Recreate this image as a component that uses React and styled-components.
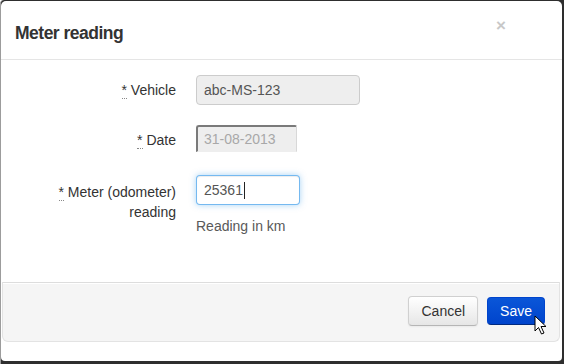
import React from "react";
import styled, { createGlobalStyle, css } from "styled-components";

const GlobalStyle = createGlobalStyle`
  html, body { margin: 0; padding: 0; background: #ffffff; }
  body { font-family: "Liberation Sans", Arial, sans-serif; color: #333; }
  * { box-sizing: border-box; }
`;

const Frame = styled.div`
  width: 564px;
  height: 364px;
  background: #2e2e2e;
  border-left: 1px solid #9c9c9c;
  border-top-left-radius: 4px;
  padding: 1px 2px 3px 0;
  display: flex;
`;

const Window = styled.div`
  flex: 1;
  background: #fff;
  border-radius: 5px 5px 4px 4px;
  display: flex;
  flex-direction: column;
  position: relative;
`;

const Header = styled.div`
  height: 59px;
  border-bottom: 1px solid #e5e5e5;
  display: flex;
  align-items: flex-start;
  padding: 0 0 0 14px;
`;

const Title = styled.h3`
  margin: 22px 0 0;
  font-size: 17.5px;
  line-height: 20px;
  font-weight: bold;
  letter-spacing: -0.5px;
  color: #333;
`;

const Close = styled.span`
  margin: 15px 56px 0 auto;
  font-size: 17px;
  line-height: 20px;
  font-weight: bold;
  color: #c8c8c8;
`;

const Body = styled.div`
  flex: 1;
  padding: 15px 0 0 15px;
  display: grid;
  grid-template-columns: 160px 1fr;
  column-gap: 20px;
  row-gap: 20px;
  align-content: start;
`;

const Label = styled.div`
  text-align: right;
  font-size: 14px;
  line-height: 20px;
  color: #333;
  padding-top: ${(p) => (p.$multi ? "7px" : "5px")};
`;

const Req = styled.abbr`
  text-decoration: none;
  border-bottom: 1px dotted #888;
  cursor: help;
`;

const Control = styled.div`
  display: flex;
  flex-direction: column;
  min-height: 30px;
`;

const Field = styled.div`
  height: 30px;
  width: ${(p) => p.$w}px;
  padding: 0 7px;
  font-size: 14px;
  line-height: 28px;
  border-radius: 4px;
  display: flex;
  align-items: center;
  ${(p) =>
    p.$variant === "readonly" &&
    css`
      background: #eeeeee;
      border: 1px solid #cccccc;
      color: #555;
    `}
  ${(p) =>
    p.$variant === "disabled" &&
    css`
      height: 27px;
      background: #eeeeee;
      border-style: solid;
      border-width: 2px 1px 1px 2px;
      border-color: #7a7a7a #d8d8d8 #eeeeee #7a7a7a;
      border-radius: 3px 2px 0 0;
      color: #a8a8a8;
      padding-left: 6px;
    `}
  ${(p) =>
    p.$variant === "focus" &&
    css`
      background: #fff;
      border: 1px solid rgba(82, 168, 236, 0.8);
      color: #555;
      box-shadow: inset 0 1px 1px rgba(0, 0, 0, 0.075),
        0 0 6px rgba(82, 168, 236, 0.5);
    `}
`;

const Caret = styled.span`
  display: inline-block;
  width: 1px;
  height: 17px;
  background: #222;
  margin-left: 1px;
`;

const Help = styled.div`
  margin-top: 11px;
  font-size: 14px;
  line-height: 20px;
  color: #595959;
`;

const Footer = styled.div`
  height: 60px;
  margin: 0 2px 19px 1px;
  background: #f5f5f5;
  border: 1px solid #e3e3e3;
  border-top-color: #dddddd;
  border-radius: 0 0 6px 6px;
  box-shadow: inset 0 1px 0 #fff;
  display: flex;
  justify-content: flex-end;
  align-items: flex-start;
  gap: 9px;
  padding: 13px 14px 0 0;
`;

const Button = styled.button`
  height: 30px;
  padding: 4px 12px;
  font-family: "Liberation Sans", Arial, sans-serif;
  font-size: 14px;
  line-height: 20px;
  border-radius: 4px;
  border: 1px solid;
  ${(p) =>
    p.$primary
      ? css`
          color: #fff;
          background: linear-gradient(#0a56d8, #0044cc);
          border-color: #0044cc #0044cc #002a80;
          margin-top: 1px;
          height: 28px;
          padding-top: 3px;
        `
      : css`
          color: #333;
          background: linear-gradient(#ffffff, #e6e6e6);
          border-color: #d0d0d0 #d0d0d0 #b5b5b5;
          box-shadow: inset 0 1px 0 rgba(255, 255, 255, 0.2),
            0 1px 2px rgba(0, 0, 0, 0.05);
        `}
`;

const Cursor = styled.svg`
  position: absolute;
  left: 533px;
  top: 314px;
`;

export default function App() {
  return (
    <>
      <GlobalStyle />
      <Frame>
        <Window>
          <Header>
            <Title>Meter reading</Title>
            <Close>×</Close>
          </Header>
          <Body>
            <Label>
              <Req title="required">*</Req> Vehicle
            </Label>
            <Control>
              <Field $variant="readonly" $w={164}>abc-MS-123</Field>
            </Control>
            <Label>
              <Req title="required">*</Req> Date
            </Label>
            <Control>
              <Field $variant="disabled" $w={101}>31-08-2013</Field>
            </Control>
            <Label $multi>
              <Req title="required">*</Req> Meter (odometer)
              <br />
              reading
            </Label>
            <Control>
              <Field $variant="focus" $w={104}>
                25361
                <Caret />
              </Field>
              <Help>Reading in km</Help>
            </Control>
          </Body>
          <Footer>
            <Button>Cancel</Button>
            <Button $primary>Save</Button>
          </Footer>
          <Cursor width="14" height="21" viewBox="0 0 14 21">
            <path
              d="M1 1 L1 16 L4.5 12.5 L7.5 19 L10 18 L7 11.5 L12 11.5 Z"
              fill="#fff"
              stroke="#000"
              strokeWidth="1"
              strokeLinejoin="round"
            />
          </Cursor>
        </Window>
      </Frame>
    </>
  );
}
